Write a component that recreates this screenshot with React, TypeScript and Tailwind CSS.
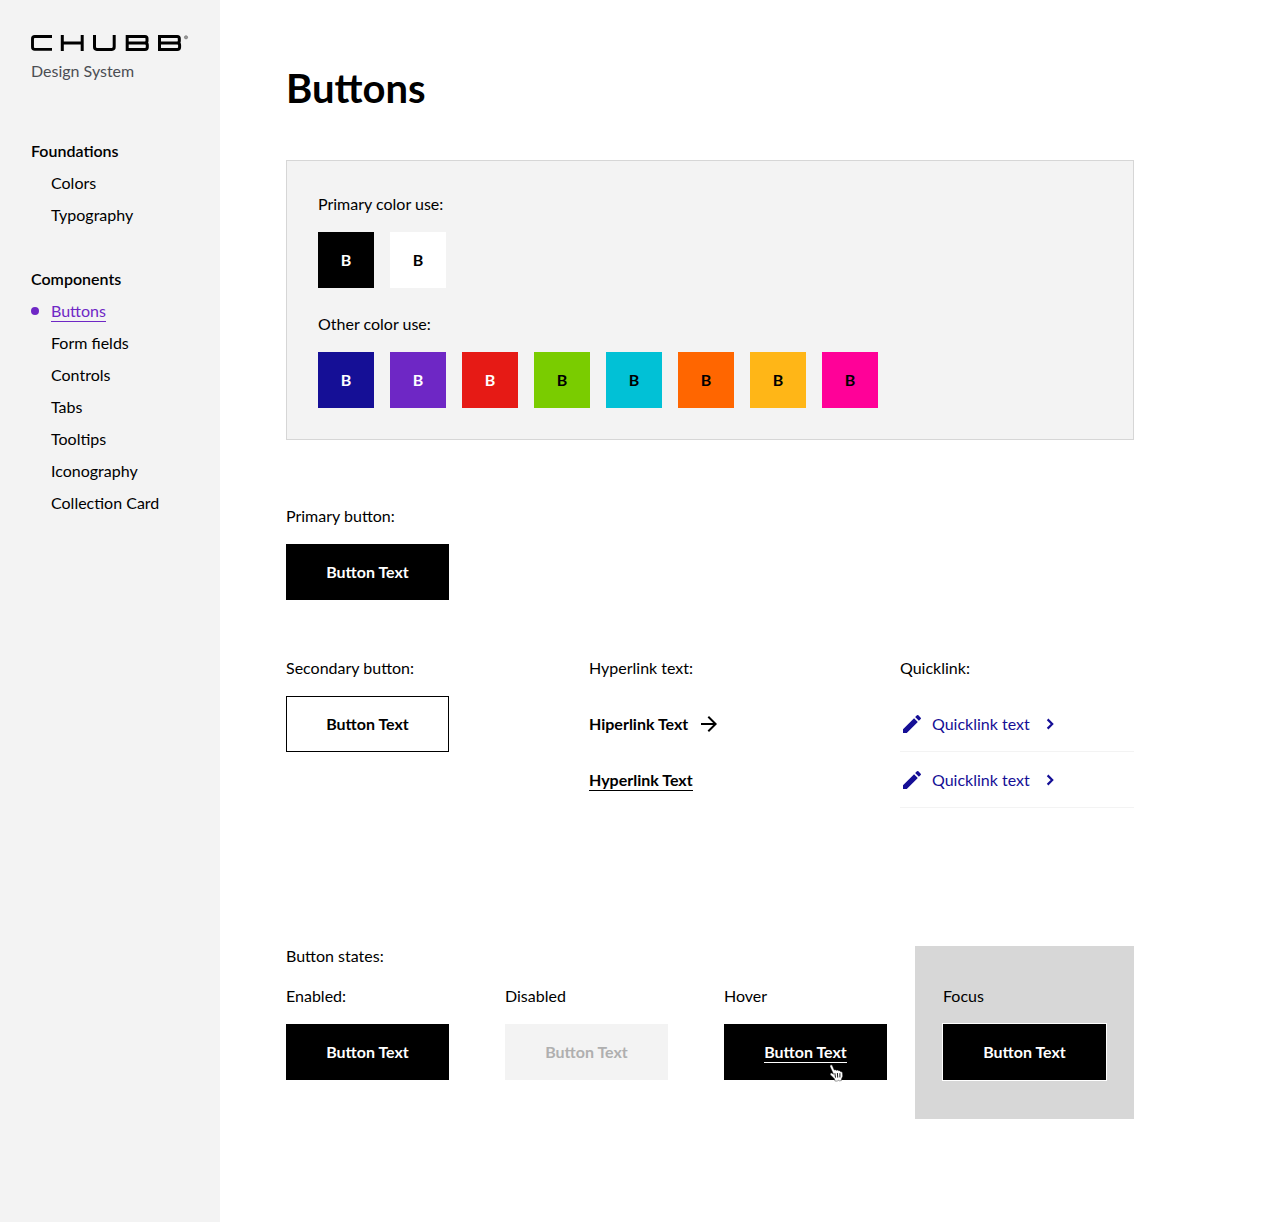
import React from "react";

function Logo() {
  return (
    <svg width="160" height="18" viewBox="0 0 160 18" role="img" aria-label="Chubb" className="block">
      <g fill="none" stroke="#000" strokeWidth="3">
        <path d="M21 2.5H3.8Q1.5 2.5 1.5 4.8V13.1Q1.5 15.4 3.8 15.4H21" strokeWidth="2.9" />
        <path d="M31.3 1V17M51.2 1V17M31.3 9H51.2" />
        <path d="M63.5 1V13.1Q63.5 15.4 65.8 15.4H80.9Q83.2 15.4 83.2 13.1V1" />
        <path d="M94.7 2.5H114Q116 2.5 116 4.6V7Q116 8.8 114 8.9Q116.3 9 116.3 10.9V13.2Q116.3 15.4 114 15.4H96.2V2.5M96.2 8.9H114" />
        <path d="M127 2.5H146.3Q148.3 2.5 148.3 4.6V7Q148.3 8.8 146.3 8.9Q148.6 9 148.6 10.9V13.2Q148.6 15.4 146.3 15.4H128.5V2.5M128.5 8.9H146.3" />
      </g>
      <circle cx="155" cy="3.3" r="1.6" fill="#999" stroke="#777" strokeWidth=".7" />
    </svg>
  );
}

function NavGroup({ title, items, active }: { title: string; items: string[]; active?: string }) {
  return (
    <div>
      <div className="font-semibold">{title}</div>
      <ul>
        {items.map((item) => (
          <li key={item} className="flex items-center">
            <span className={item === active ? "mr-3 size-2 rounded-full bg-[#6e27c5]" : "mr-3 size-2"} />
            {item === active ? (
              <a className="flex h-8 items-center text-[#6e27c5]">
                <span className="h-[22px] border-b border-[#6e27c5] leading-[22px]">{item}</span>
              </a>
            ) : (
              <a>{item}</a>
            )}
          </li>
        ))}
      </ul>
    </div>
  );
}

function Swatch({ className }: { className: string }) {
  return <div className={`flex size-14 items-center justify-center font-bold ${className}`}>B</div>;
}

function Button({ className, children = "Button Text" }: { className: string; children?: React.ReactNode }) {
  return (
    <button className={`flex h-14 w-[163px] items-center justify-center font-bold ${className}`}>{children}</button>
  );
}

function Quicklink() {
  return (
    <a className="flex h-14 items-center border-b border-[#f3f3f3] text-[#150f96]">
      <svg width="24" height="24" viewBox="0 0 24 24" fill="currentColor">
        <path d="M3 17.25V21h3.75L17.81 9.94l-3.75-3.75L3 17.25zM20.71 7.04a1 1 0 0 0 0-1.41l-2.34-2.34a1 1 0 0 0-1.41 0l-1.83 1.83 3.75 3.75 1.83-1.83z" />
      </svg>
      <span className="ml-2">Quicklink text</span>
      <svg className="ml-2" width="24" height="24" viewBox="0 0 24 24" fill="none" stroke="currentColor" strokeWidth="2.2">
        <path d="m9.6 7.4 4.6 4.6-4.6 4.6" />
      </svg>
    </a>
  );
}

function HandCursor() {
  return (
    <svg className="absolute top-[39px] left-[103px]" width="18" height="20" viewBox="0 0 18 20">
      <path
        d="M3 2.9c.4-1.3 1.8-1.4 2.4-.1l1.8 4.3c.8-.6 1.8-.4 2.2.4.8-.6 1.8-.5 2.2.3 1-.4 1.9 0 2.1 1 1-.2 1.7.3 1.8 1.3l.2 3.2-1.2 2.6-.1 1.7-2.2.2-.8-.7-.9 1-2.6-.1-.5-2.2-3.9-3.9c-.8-1.1.5-2.3 1.6-1.6l1.5 1-3.4-7.4z"
        fill="#fff"
        stroke="#000"
        strokeWidth=".4"
      />
      <path d="M7.9 10.2l.6 4.4M10.4 10l.3 4.6M12.9 10.2v4.2" stroke="#000" strokeWidth=".9" fill="none" />
    </svg>
  );
}

export default function App() {
  return (
    <div className="flex min-h-[1222px] bg-white font-['Lato',sans-serif] text-base leading-8 text-black">
      <aside className="w-[220px] shrink-0 bg-[#f3f3f3] pt-[34px] pl-[31px]">
        <Logo />
        <div className="mt-[3px] text-[#4b4e53]">Design System</div>
        <nav className="mt-12 flex flex-col gap-8">
          <NavGroup title="Foundations" items={["Colors", "Typography"]} />
          <NavGroup
            title="Components"
            active="Buttons"
            items={["Buttons", "Form fields", "Controls", "Tabs", "Tooltips", "Iconography", "Collection Card"]}
          />
        </nav>
      </aside>

      <main className="ml-[66px] w-[848px]">
        <h1 className="mt-16 text-[40px] leading-[48px] font-bold">Buttons</h1>

        <section className="mt-12 h-[280px] border border-[#d6d6d6] bg-[#f3f3f3] px-[31px] pt-[27px]">
          <p>Primary color use:</p>
          <div className="mt-3 flex gap-4">
            <Swatch className="bg-black text-white" />
            <Swatch className="bg-white" />
          </div>
          <p className="mt-5">Other color use:</p>
          <div className="mt-3 flex gap-4">
            <Swatch className="bg-[#150f96] text-white" />
            <Swatch className="bg-[#6e27c5] text-white" />
            <Swatch className="bg-[#e61a15] text-white" />
            <Swatch className="bg-[#7acc00]" />
            <Swatch className="bg-[#01c1d6]" />
            <Swatch className="bg-[#ff6600]" />
            <Swatch className="bg-[#ffb617]" />
            <Swatch className="bg-[#ff0198]" />
          </div>
        </section>

        <section className="mt-15">
          <p className="mb-3">Primary button:</p>
          <Button className="bg-black text-white" />
        </section>

        <section className="mt-13 grid h-[156px] grid-cols-[303px_311px_234px]">
          <div>
            <p className="mb-3">Secondary button:</p>
            <Button className="border border-black" />
          </div>
          <div>
            <p className="mb-3">Hyperlink text:</p>
            <a className="flex h-14 items-center font-bold">
              Hiperlink Text
              <svg className="ml-[9px]" width="24" height="24" viewBox="0 0 24 24" fill="currentColor">
                <path d="m12 4-1.41 1.41L16.17 11H4v2h12.17l-5.58 5.59L12 20l8-8z" />
              </svg>
            </a>
            <a className="flex h-14 items-center font-bold">
              <span className="h-[22px] border-b border-black leading-[22px]">Hyperlink Text</span>
            </a>
          </div>
          <div>
            <p className="mb-3">Quicklink:</p>
            <Quicklink />
            <Quicklink />
          </div>
        </section>

        <section className="mt-[132px] flex">
          <div className="w-[629px]">
            <p>Button states:</p>
            <div className="mt-2 flex gap-14">
              <div>
                <p className="mb-3">Enabled:</p>
                <Button className="bg-black text-white" />
              </div>
              <div>
                <p className="mb-3">Disabled</p>
                <Button className="bg-[#f3f3f3] text-[#afafaf]" />
              </div>
              <div>
                <p className="mb-3">Hover</p>
                <div className="relative">
                  <Button className="bg-black text-white">
                    <span className="h-[22px] border-b border-white leading-[22px]">Button Text</span>
                  </Button>
                  <HandCursor />
                </div>
              </div>
            </div>
          </div>
          <div className="mt-[6px] h-[173px] w-[219px] bg-[#d7d7d7] px-7 pt-[34px]">
            <p className="mb-3">Focus</p>
            <Button className="bg-black text-white outline outline-white" />
          </div>
        </section>
      </main>
    </div>
  );
}
